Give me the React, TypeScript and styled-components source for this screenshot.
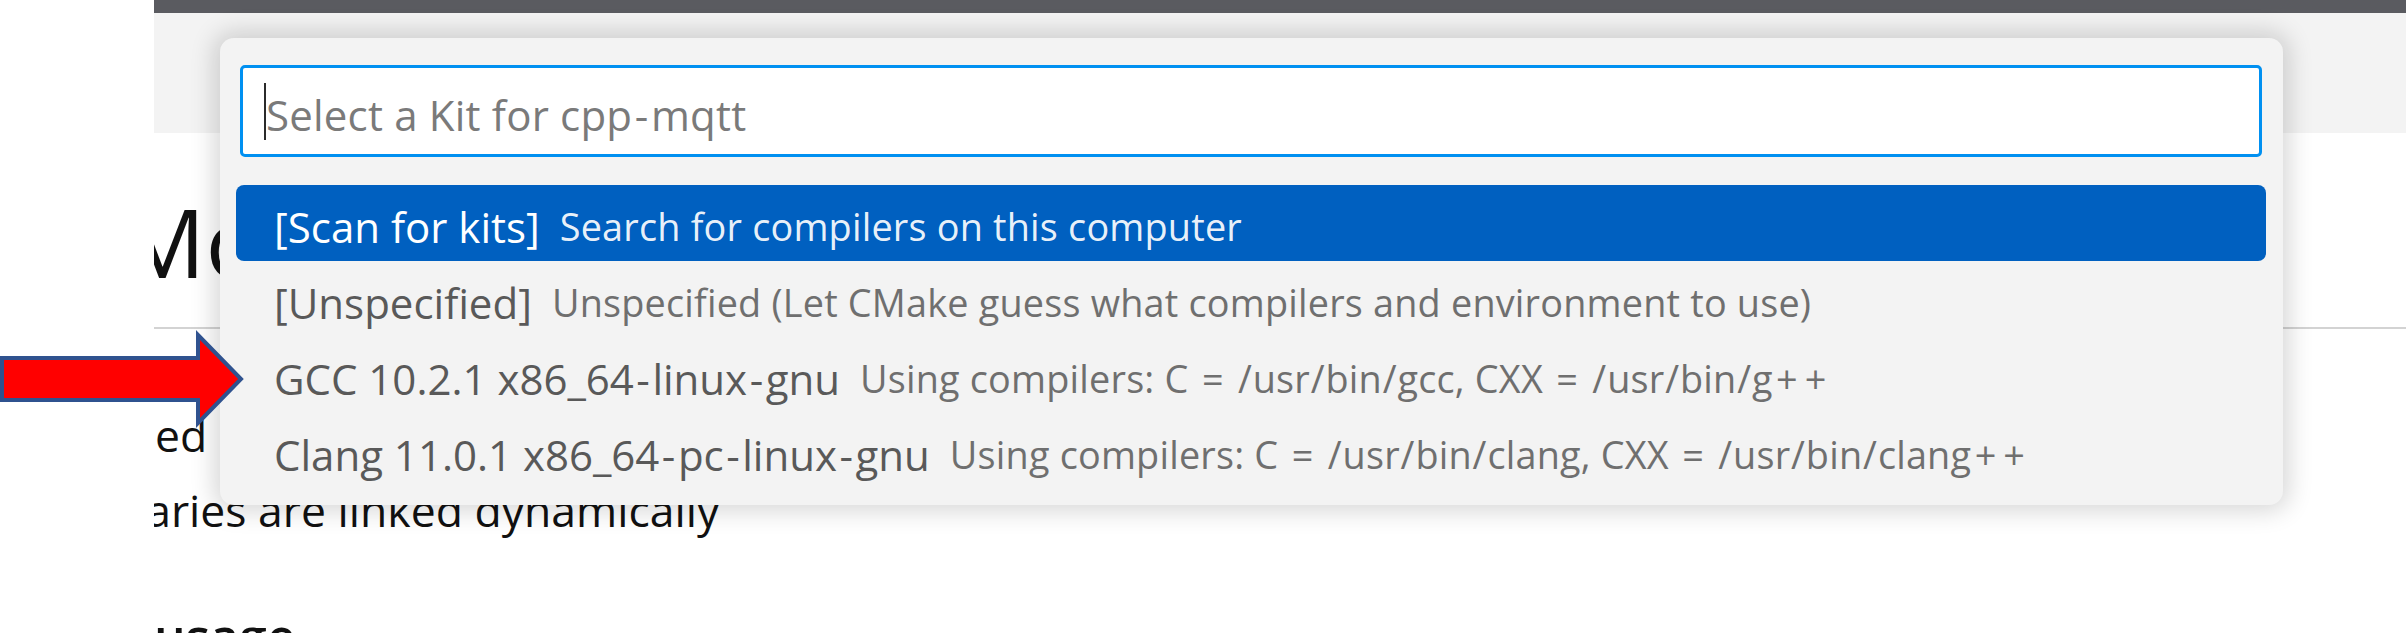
import React from "react";
import styled, { createGlobalStyle } from "styled-components";

const Global = createGlobalStyle`
  html, body {
    margin: 0;
    padding: 0;
    background: #ffffff;
  }
  body {
    width: 2406px;
    height: 633px;
    overflow: hidden;
    font-family: "Open Sans", "Noto Sans", sans-serif;
  }
  #root {
    width: 2406px;
    height: 633px;
  }
`;

const Screen = styled.div`
  position: relative;
  width: 2406px;
  height: 633px;
  overflow: hidden;
  display: flex;
  background: #ffffff;
`;

const Gutter = styled.div`
  width: 154px;
  flex: none;
  background: #ffffff;
`;

const Workbench = styled.div`
  flex: 1;
  min-width: 0;
  display: flex;
  flex-direction: column;
  overflow: hidden;
`;

const TitleBar = styled.div`
  height: 13px;
  flex: none;
  background: #5a5b60;
`;

const TabStrip = styled.div`
  height: 120px;
  flex: none;
  background: #f3f3f3;
`;

const Preview = styled.div`
  flex: 1;
  overflow: hidden;
  color: #111111;
  font-family: "Open Sans", "Noto Sans", sans-serif;
`;

const Heading = styled.h1<{ $shift: number }>`
  margin: 51px 0 0 0;
  padding: 0 0 29px 0;
  font-size: 95px;
  font-weight: 400;
  line-height: 1.2;
  white-space: nowrap;
  text-indent: ${(p) => p.$shift}px;
  border-bottom: 2px solid #d3d3d3;
`;

const Lines = styled.div`
  margin-top: 68px;
`;

const Line = styled.p<{ $shift: number }>`
  margin: 0;
  font-size: 44.5px;
  line-height: 75px;
  white-space: nowrap;
  text-indent: ${(p) => p.$shift}px;
`;

const SubHeading = styled.h2`
  margin: 59px 0 0 0;
  font-size: 50px;
  font-weight: 600;
  line-height: 1.2;
  white-space: nowrap;
`;

const QuickPick = styled.div`
  position: absolute;
  left: 220px;
  top: 38px;
  width: 2063px;
  box-sizing: border-box;
  padding: 27px 17px 16px 16px;
  background: #f3f3f3;
  border-radius: 14px;
  box-shadow: 0 0 24px 6px rgba(0, 0, 0, 0.16);
  font-family: "Open Sans", "Noto Sans", sans-serif;
`;

const InputBox = styled.div`
  box-sizing: border-box;
  height: 92px;
  margin: 0 4px;
  padding: 0 0 0 21px;
  display: flex;
  align-items: center;
  background: #ffffff;
  border: 3px solid #0090f1;
  border-radius: 5px;
`;

const Caret = styled.span`
  flex: none;
  width: 2px;
  height: 57px;
  background: #2b2b2b;
`;

const Placeholder = styled.span`
  padding-top: 6px;
  font-size: 42px;
  letter-spacing: 0.2px;
  color: #7a7a7a;
  white-space: nowrap;
`;

const List = styled.div`
  margin-top: 28px;
  display: flex;
  flex-direction: column;
`;

const Row = styled.div<{ $active?: boolean }>`
  box-sizing: border-box;
  height: 76px;
  padding: 6px 0 0 38px;
  display: flex;
  align-items: center;
  border-radius: 8px;
  white-space: nowrap;
  background: ${(p) => (p.$active ? "#0060c0" : "transparent")};
  color: ${(p) => (p.$active ? "#ffffff" : "#595959")};
`;

const Label = styled.span`
  font-size: 42px;
`;

const Description = styled.span<{ $active?: boolean }>`
  margin-left: 20px;
  font-size: 37.8px;
  letter-spacing: 0.2px;
  color: ${(p) => (p.$active ? "rgba(255, 255, 255, 0.93)" : "#6f6f6f")};
`;

/* Segoe UI draws these symbols wider than Open Sans does */
const Glyph = styled.span<{ $pad: number }>`
  padding: 0 ${(p) => p.$pad}em;
`;

const glyphPad: Record<string, number> = { "-": 0.06, "=": 0.09, "+": 0.09, "/": 0.02 };

function Wide({ text }: { text: string }) {
  const parts = text.split(/([-=+/])/);
  return (
    <>
      {parts.map((s, i) =>
        glyphPad[s] !== undefined ? (
          <Glyph key={i} $pad={glyphPad[s]}>
            {s}
          </Glyph>
        ) : (
          <React.Fragment key={i}>{s}</React.Fragment>
        )
      )}
    </>
  );
}

const Arrow = styled.svg`
  position: absolute;
  left: 0;
  top: 330px;
  width: 250px;
  height: 100px;
  overflow: visible;
`;

type Kit = { label: string; description: string; active?: boolean };

const kits: Kit[] = [
  { label: "[Scan for kits]", description: "Search for compilers on this computer", active: true },
  {
    label: "[Unspecified]",
    description: "Unspecified (Let CMake guess what compilers and environment to use)",
  },
  {
    label: "GCC 10.2.1 x86_64-linux-gnu",
    description: "Using compilers: C = /usr/bin/gcc, CXX = /usr/bin/g++",
  },
  {
    label: "Clang 11.0.1 x86_64-pc-linux-gnu",
    description: "Using compilers: C = /usr/bin/clang, CXX = /usr/bin/clang++",
  },
];

export default function App() {
  return (
    <>
      <Global />
      <Screen>
        <Gutter />
        <Workbench>
          <TitleBar />
          <TabStrip />
          <Preview>
            <Heading $shift={-34}>Mosquitto C++ MQTT</Heading>
            <Lines>
              <Line $shift={1}>ed</Line>
              <Line $shift={-26}>raries are linked dynamically</Line>
            </Lines>
            <SubHeading>usage</SubHeading>
          </Preview>
        </Workbench>

        <QuickPick>
          <InputBox>
            <Caret />
            <Placeholder>
              <Wide text="Select a Kit for cpp-mqtt" />
            </Placeholder>
          </InputBox>
          <List>
            {kits.map((k) => (
              <Row key={k.label} $active={k.active}>
                <Label>
                  <Wide text={k.label} />
                </Label>
                <Description $active={k.active}>
                  <Wide text={k.description} />
                </Description>
              </Row>
            ))}
          </List>
        </QuickPick>

        <Arrow viewBox="0 0 250 100">
          <polygon
            points="2,28 198,28 198,5 241,49 198,93 198,70 2,70"
            fill="#ff0000"
            stroke="#2f528f"
            strokeWidth="4"
            strokeLinejoin="miter"
          />
        </Arrow>
      </Screen>
    </>
  );
}
